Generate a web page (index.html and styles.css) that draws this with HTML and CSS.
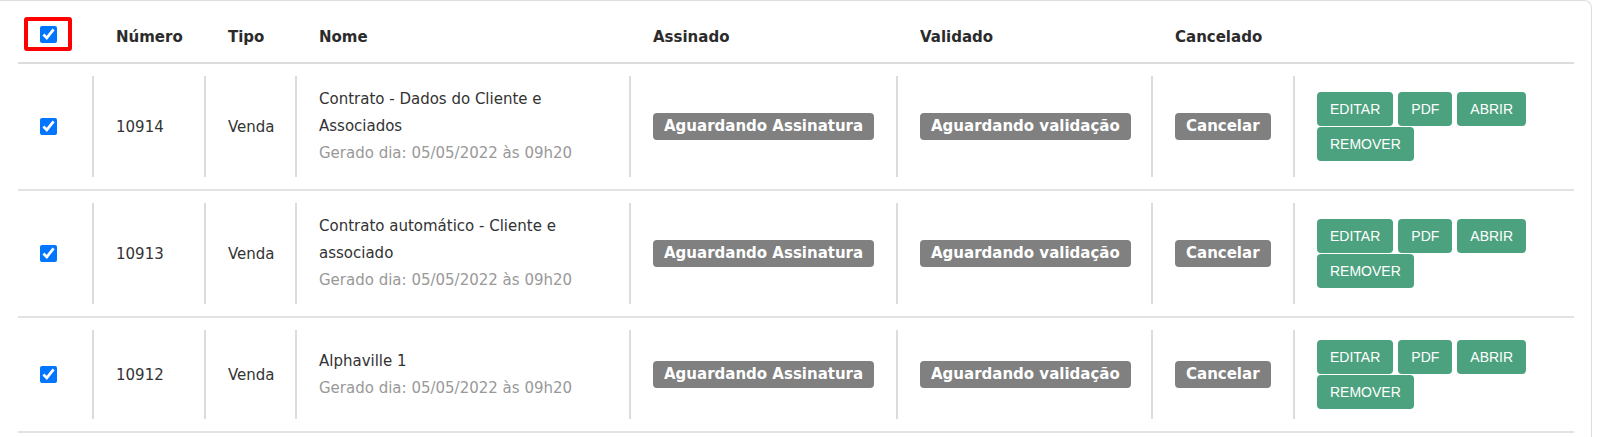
FILE: index.html
```html
<!DOCTYPE html>
<html lang="pt-BR">
<head>
    <meta charset="UTF-8">
    <meta name="viewport" content="width=device-width, initial-scale=1.0">
    <title>Contratos</title>
    <link rel="stylesheet" href="styles.css">
</head>
<body>
    <div class="card">
        <div class="grid-row head">
            <div class="hcell"><span class="select-all"><input type="checkbox" checked></span></div>
            <div class="hcell">Número</div>
            <div class="hcell">Tipo</div>
            <div class="hcell">Nome</div>
            <div class="hcell">Assinado</div>
            <div class="hcell">Validado</div>
            <div class="hcell">Cancelado</div>
            <div class="hcell"></div>
        </div>

        <div class="grid-row">
            <div class="cell first"><input type="checkbox" checked></div>
            <div class="cell">10914</div>
            <div class="cell">Venda</div>
            <div class="cell">
                <div class="name">
                    Contrato - Dados do Cliente e Associados
                    <span class="date">Gerado dia: 05/05/2022 às 09h20</span>
                </div>
            </div>
            <div class="cell"><span class="badge">Aguardando Assinatura</span></div>
            <div class="cell"><span class="badge">Aguardando validação</span></div>
            <div class="cell"><span class="badge">Cancelar</span></div>
            <div class="cell">
                <div class="actions">
                    <button>EDITAR</button>
                    <button>PDF</button>
                    <button>ABRIR</button>
                    <button>REMOVER</button>
                </div>
            </div>
        </div>

        <div class="grid-row">
            <div class="cell first"><input type="checkbox" checked></div>
            <div class="cell">10913</div>
            <div class="cell">Venda</div>
            <div class="cell">
                <div class="name">
                    Contrato automático - Cliente e associado
                    <span class="date">Gerado dia: 05/05/2022 às 09h20</span>
                </div>
            </div>
            <div class="cell"><span class="badge">Aguardando Assinatura</span></div>
            <div class="cell"><span class="badge">Aguardando validação</span></div>
            <div class="cell"><span class="badge">Cancelar</span></div>
            <div class="cell">
                <div class="actions">
                    <button>EDITAR</button>
                    <button>PDF</button>
                    <button>ABRIR</button>
                    <button>REMOVER</button>
                </div>
            </div>
        </div>

        <div class="grid-row">
            <div class="cell first"><input type="checkbox" checked></div>
            <div class="cell">10912</div>
            <div class="cell">Venda</div>
            <div class="cell">
                <div class="name">
                    Alphaville 1
                    <span class="date">Gerado dia: 05/05/2022 às 09h20</span>
                </div>
            </div>
            <div class="cell"><span class="badge">Aguardando Assinatura</span></div>
            <div class="cell"><span class="badge">Aguardando validação</span></div>
            <div class="cell"><span class="badge">Cancelar</span></div>
            <div class="cell">
                <div class="actions">
                    <button>EDITAR</button>
                    <button>PDF</button>
                    <button>ABRIR</button>
                    <button>REMOVER</button>
                </div>
            </div>
        </div>
    </div>
</body>
</html>
```

FILE: styles.css
```css
body {
    margin: 0;
    background-color: #fff;
    font-family: "DejaVu Sans", Verdana, sans-serif;
    font-size: 15px;
    color: #333;
}

.card {
    width: 1556px;
    padding: 0 17px 40px 18px;
    border-top: 1px solid #dedede;
    border-right: 1px solid #dedede;
    border-top-right-radius: 8px;
}

.grid-row {
    display: grid;
    grid-template-columns: 74px 112px 91px 334px 267px 255px 142px 281px;
    padding: 12px 0;
    border-bottom: 2px solid #e3e3e3;
}

.grid-row.head {
    height: 63px;
    padding: 0;
    border-bottom-color: #dcdcdc;
    box-sizing: border-box;
}

.hcell {
    display: flex;
    align-items: flex-end;
    padding: 0 0 15px 24px;
    font-weight: bold;
    line-height: 20px;
    color: #2b2b2b;
}

.hcell:first-child {
    align-items: flex-start;
    padding: 16px 0 0 6px;
}

.select-all {
    display: flex;
    align-items: center;
    width: 48px;
    height: 34px;
    padding-left: 12px;
    box-sizing: border-box;
    border: 4px solid #f00;
    border-radius: 3px;
}

input[type="checkbox"] {
    width: 17px;
    height: 17px;
    margin: 0;
    accent-color: #0075ff;
}

.cell {
    display: flex;
    align-items: center;
    padding: 10px 22px;
    border-left: 2px solid #dcdcdc;
}

.cell.first {
    border-left: none;
    padding-left: 22px;
}

.name {
    line-height: 27px;
}

.date {
    display: block;
    color: #999;
}

.badge {
    display: inline-block;
    padding: 5px 11px;
    line-height: 17px;
    background-color: #808080;
    color: #fff;
    font-weight: bold;
    border-radius: 4px;
    white-space: nowrap;
}

.actions {
    display: flex;
    flex-wrap: wrap;
    gap: 1px 5px;
}

button {
    height: 34px;
    padding: 0 13px;
    background-color: #4ca27e;
    color: #fff;
    border: none;
    border-radius: 4px;
    font-family: "Liberation Sans", Arial, sans-serif;
    font-size: 14px;
    cursor: pointer;
}

button:hover {
    background-color: #3f8d6c;
}
```
